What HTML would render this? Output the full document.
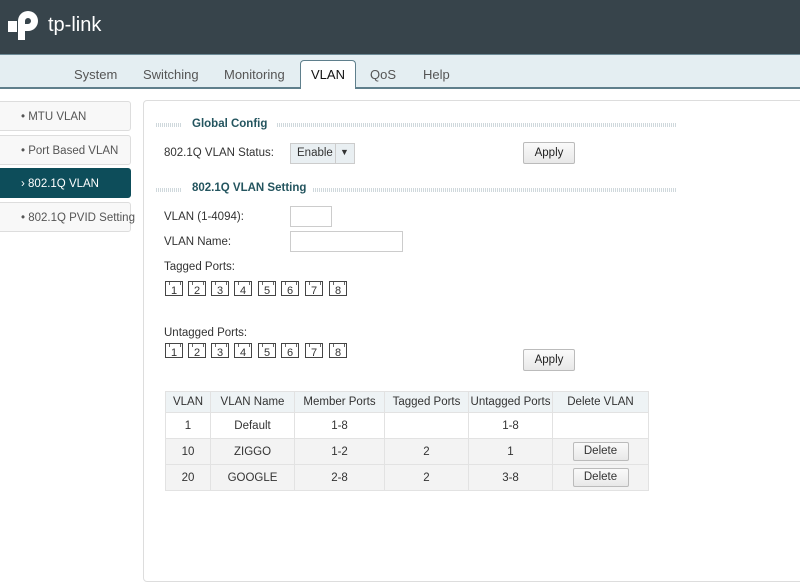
<!DOCTYPE html><html><head><style>
body{margin:0;width:800px;height:564px;overflow:hidden;font-family:"Liberation Sans",sans-serif;font-size:11.5px;color:#333;background:#fff;position:relative}
.hd{position:absolute;left:0;top:0;width:800px;height:54px;background:#37444b}
.nav{position:absolute;left:0;top:54px;width:800px;height:32px;background:#e4eef2;border-top:1px solid #6d8a96;border-bottom:2px solid #5f7f8c}
.nav span{position:absolute;top:12px;font-size:13px;color:#555}
.tab{position:absolute;left:300px;top:60px;width:54px;height:28px;background:#fff;border:1px solid #5f7f8c;border-bottom:none;border-radius:4px 4px 0 0;text-align:center;line-height:27px;font-size:13px;color:#111}
.side{position:absolute;left:-5px;width:136px;height:30px;border:1px solid #ddd;border-radius:3px;background:#f8f8f8;color:#555;line-height:30px;padding-left:25px;box-sizing:border-box;white-space:nowrap}
.panel{position:absolute;left:143px;top:100px;width:670px;height:480px;border:1px solid #ddd;border-radius:4px;background:#fff}
.a{position:absolute;white-space:nowrap}
.sec{position:absolute;font-weight:bold;color:#24555f;font-size:11.5px}
.dots{position:absolute;height:4px;background:repeating-linear-gradient(90deg,#cfd8dc 0 1px,transparent 1px 2px)}
.btn{position:absolute;width:50px;height:20px;border:1px solid #bbb;border-radius:2px;background:linear-gradient(#fafafa,#e8e8e8);text-align:center;line-height:20px;color:#222}
.inp{position:absolute;border:1px solid #ccc;background:#fff;height:19px}
.port{position:absolute;width:18px;height:15px;border:1px solid #444;font-size:11px;text-align:center;line-height:19px;box-sizing:border-box;overflow:hidden}
.port:before{content:"";position:absolute;left:3px;top:0;width:10px;height:3px;border:1px solid #666;border-top:none;border-bottom:none}
table{position:absolute;left:165px;top:391px;width:484px;border-collapse:collapse;font-size:11.5px;table-layout:fixed}
td,th{border:1px solid #e2e2e2;text-align:center;font-weight:normal;height:25px;padding:0;white-space:nowrap}
th{background:#eef3f5;height:20px}
tr:nth-child(3) td,tr:nth-child(4) td{background:#f3f3f3}
.db{display:inline-block;width:54px;height:17px;border:1px solid #bbb;border-radius:2px;background:linear-gradient(#fafafa,#e8e8e8);line-height:17px}
</style></head><body>
<div class="hd">
<svg class="a" style="left:8px;top:10px" width="36" height="34" viewBox="0 0 36 34"><path d="M0 11h9v11h-9z" fill="#fff"/><path d="M10 30V11a10 10 0 1 1 10 10h-3v-7h3a3 3 0 1 0-3-3v19z" fill="#fff"/></svg>
<div class="a" style="left:48px;top:14px;color:#fff;font-size:20px">tp-link</div>
</div>
<div class="nav"><span style="left:74px">System</span><span style="left:143px">Switching</span><span style="left:224px">Monitoring</span><span style="left:370px">QoS</span><span style="left:423px">Help</span></div>
<div class="tab">VLAN</div>
<div class="side" style="top:101px">• MTU VLAN</div>
<div class="side" style="top:135px">• Port Based VLAN</div>
<div class="side" style="top:168px;background:#0d4d5a;color:#fff;border-color:#0d4d5a">› 802.1Q VLAN</div>
<div class="side" style="top:202px">• 802.1Q PVID Setting</div>
<div class="panel"></div>
<div class="dots" style="left:156px;top:123px;width:25px"></div>
<div class="sec" style="left:192px;top:118px">Global Config</div>
<div class="dots" style="left:277px;top:123px;width:400px"></div>
<div class="a" style="left:164px;top:147px">802.1Q VLAN Status:</div>
<div class="a" style="left:290px;top:143px;width:63px;height:19px;border:1px solid #ccc;background:#e9eff2"><span class="a" style="left:6px;top:3px">Enable</span><span class="a" style="left:44px;top:0;width:1px;height:19px;background:#ccc"></span><span class="a" style="left:49px;top:3px;font-size:9px">▼</span></div>
<div class="btn" style="left:523px;top:142px">Apply</div>
<div class="dots" style="left:156px;top:188px;width:25px"></div>
<div class="sec" style="left:192px;top:182px">802.1Q VLAN Setting</div>
<div class="dots" style="left:313px;top:188px;width:364px"></div>
<div class="a" style="left:164px;top:211px">VLAN (1-4094):</div>
<div class="inp" style="left:290px;top:206px;width:40px"></div>
<div class="a" style="left:164px;top:236px">VLAN Name:</div>
<div class="inp" style="left:290px;top:231px;width:111px"></div>
<div class="a" style="left:164px;top:261px">Tagged Ports:</div>
<div class="port" style="left:165px;top:281px">1</div><div class="port" style="left:188px;top:281px">2</div><div class="port" style="left:211px;top:281px">3</div><div class="port" style="left:234px;top:281px">4</div><div class="port" style="left:258px;top:281px">5</div><div class="port" style="left:281px;top:281px">6</div><div class="port" style="left:305px;top:281px">7</div><div class="port" style="left:329px;top:281px">8</div>
<div class="a" style="left:164px;top:327px">Untagged Ports:</div>
<div class="port" style="left:165px;top:343px">1</div><div class="port" style="left:188px;top:343px">2</div><div class="port" style="left:211px;top:343px">3</div><div class="port" style="left:234px;top:343px">4</div><div class="port" style="left:258px;top:343px">5</div><div class="port" style="left:281px;top:343px">6</div><div class="port" style="left:305px;top:343px">7</div><div class="port" style="left:329px;top:343px">8</div>
<div class="btn" style="left:523px;top:349px">Apply</div>
<table>
<tr><th style="width:44px">VLAN</th><th style="width:83px">VLAN Name</th><th style="width:89px">Member Ports</th><th style="width:83px">Tagged Ports</th><th style="width:83px">Untagged Ports</th><th>Delete VLAN</th></tr>
<tr><td>1</td><td>Default</td><td>1-8</td><td></td><td>1-8</td><td></td></tr>
<tr><td>10</td><td>ZIGGO</td><td>1-2</td><td>2</td><td>1</td><td><span class="db">Delete</span></td></tr>
<tr><td>20</td><td>GOOGLE</td><td>2-8</td><td>2</td><td>3-8</td><td><span class="db">Delete</span></td></tr>
</table>
</body></html>
